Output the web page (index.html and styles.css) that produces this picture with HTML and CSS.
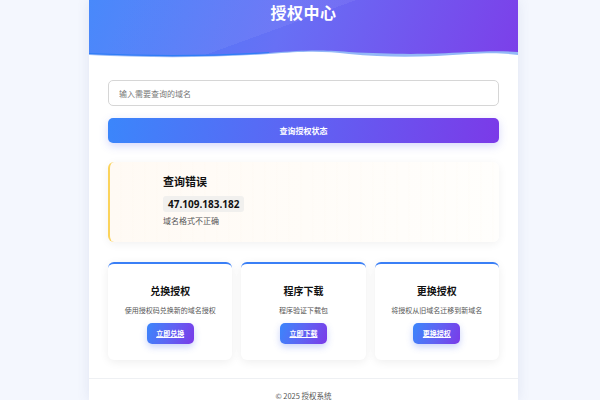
FILE: index.html
```html
<!DOCTYPE html>
<html lang="zh-CN">
<head>
<meta charset="utf-8">
<title>授权中心</title>
<link rel="stylesheet" href="styles.css">
</head>
<body>
<div class="container">
  <header class="header">
    <h1 class="title">授权中心</h1>
    <svg class="wave" viewBox="0 0 429 12" preserveAspectRatio="none">
      <path d="M0 6 C60 9 120 9 180 5 C220 2 230 2 260 4 C300 6 330 7 380 4 C400 3 415 3 429 4 L429 12 L0 12 Z" fill="#93b8f7"/>
      <path d="M0 7 C60 10 120 10 180 6 C215 3 235 3 260 6 C300 10 340 9 380 6 C400 5 415 5 429 7 L429 12 L0 12 Z" fill="#ffffff"/>
      <path d="M0 5.5 C60 8.5 120 8.5 180 4.5" stroke="#2f7df6" stroke-width="1.2" fill="none"/>
    </svg>
  </header>

  <main class="main">
    <input class="domain-input" type="text" placeholder="输入需要查询的域名">
    <button class="query-btn">查询授权状态</button>

    <section class="result-card">
      <div class="result-body">
        <h2 class="result-title">查询错误</h2>
        <div class="ip-badge">47.109.183.182</div>
        <p class="result-msg">域名格式不正确</p>
      </div>
    </section>

    <section class="actions">
      <div class="action-card">
        <h3 class="action-title">兑换授权</h3>
        <p class="action-desc">使用授权码兑换新的域名授权</p>
        <a class="action-btn" href="#">立即兑换</a>
      </div>
      <div class="action-card">
        <h3 class="action-title">程序下载</h3>
        <p class="action-desc">程序验证下载包</p>
        <a class="action-btn" href="#">立即下载</a>
      </div>
      <div class="action-card">
        <h3 class="action-title">更换授权</h3>
        <p class="action-desc">将授权从旧域名迁移到新域名</p>
        <a class="action-btn" href="#">更换授权</a>
      </div>
    </section>
  </main>

  <footer class="footer">© 2025 授权系统</footer>
</div>
</body>
</html>
```

FILE: styles.css
```css
* { box-sizing: border-box; }
html, body { margin: 0; padding: 0; }
body {
  background: #f4f7fe;
  font-family: "Noto Sans CJK SC", "Noto Sans", sans-serif;
  color: #222;
}
.container {
  width: 429px;
  margin-left: 89px;
  background: #fff;
  min-height: 400px;
  box-shadow: 0 0 12px rgba(80, 100, 160, 0.12);
  display: flex;
  flex-direction: column;
}
.header {
  position: relative;
  height: 60px;
  background:
    linear-gradient(160deg, rgba(255,255,255,0.06) 0 45%, rgba(255,255,255,0) 45%),
    linear-gradient(110deg, #3d82fb 0%, #6770f5 45%, #7c3fe9 100%);
  display: flex;
  justify-content: center;
}
.title {
  margin: 1px 0 0;
  font-size: 16px;
  font-weight: 700;
  color: #fff;
  line-height: 22px;
  letter-spacing: 0.5px;
}
.wave {
  position: absolute;
  left: 0;
  bottom: 0;
  width: 100%;
  height: 12px;
  display: block;
}
.main {
  padding: 20px 19px 0;
  display: flex;
  flex-direction: column;
}
.domain-input {
  height: 26px;
  border: 1px solid #d6d6d6;
  border-radius: 5px;
  padding: 0 10px;
  font-family: inherit;
  font-size: 8px;
  color: #333;
  outline: none;
}
.domain-input::placeholder { color: #777; }
.query-btn {
  margin-top: 12px;
  height: 25px;
  border: none;
  border-radius: 5px;
  background: linear-gradient(100deg, #3b86fb 0%, #5f63f3 50%, #7b3ae8 100%);
  color: #fff;
  font-family: inherit;
  font-weight: 700;
  font-size: 8px;
  box-shadow: 0 3px 8px rgba(90, 100, 240, 0.25);
}
.result-card {
  margin-top: 19px;
  height: 80px;
  border-left: 2px solid #fbd35b;
  border-radius: 6px;
  background:
    repeating-linear-gradient(90deg, rgba(250,240,225,0) 0 10px, rgba(250,242,230,0.08) 10px 12px),
    linear-gradient(90deg, #fffaf4, #fffefc);
  box-shadow: 0 2px 10px rgba(0, 0, 0, 0.06);
  padding: 12px 0 0 53px;
}
.result-title {
  margin: 0;
  font-size: 11px;
  font-weight: 700;
  color: #111;
  line-height: 15px;
}
.ip-badge {
  display: inline-block;
  margin-top: 2px;
  padding: 0 5px;
  height: 16px;
  line-height: 16px;
  background: #f1f0ee;
  border-radius: 3px;
  font-family: "Open Sans", "Noto Sans", sans-serif;
  font-weight: 700;
  font-size: 10px;
  color: #111;
}
.result-msg {
  margin: 2px 0 0;
  font-size: 8px;
  color: #555;
  line-height: 11px;
}
.actions {
  margin-top: 20px;
  display: grid;
  grid-template-columns: repeat(3, 1fr);
  gap: 9px;
}
.action-card {
  height: 98px;
  border-top: 2px solid #3a7ff6;
  border-radius: 6px;
  background: #fff;
  box-shadow: 0 2px 10px rgba(0, 0, 0, 0.07);
  display: flex;
  flex-direction: column;
  align-items: center;
  padding-top: 20px;
}
.action-title {
  margin: 0;
  font-size: 10px;
  font-weight: 700;
  color: #111;
  line-height: 14px;
}
.action-desc {
  margin: 7px 0 0;
  font-size: 7px;
  color: #555;
  line-height: 10px;
}
.action-btn {
  margin-top: 8px;
  width: 47px;
  height: 21px;
  border-radius: 5px;
  background: linear-gradient(110deg, #3b86fb 0%, #5f63f3 50%, #7b3ae8 100%);
  color: #fff;
  font-size: 7px;
  font-weight: 700;
  line-height: 21px;
  text-align: center;
  text-decoration: underline;
  box-shadow: 0 3px 7px rgba(80, 110, 240, 0.3);
}
.footer {
  margin-top: 18px;
  border-top: 1px solid #eef0f3;
  padding-top: 11px;
  text-align: center;
  font-size: 7.5px;
  color: #555;
}
```
